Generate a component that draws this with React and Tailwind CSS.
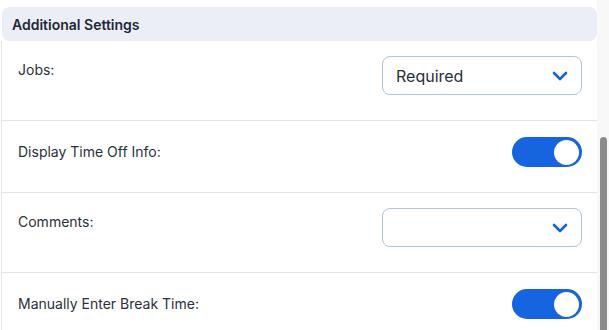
import React from "react";

function Chevron() {
  return (
    <svg width="16" height="10" viewBox="0 0 16 10" fill="none">
      <path d="M2 2 L8 8 L14 2" stroke="#1664e0" strokeWidth="2.6" strokeLinecap="round" strokeLinejoin="round" />
    </svg>
  );
}

function Select({ value }) {
  return (
    <div className="w-[200px] h-[39px] shrink-0 border border-[#aec6dc] rounded-[8px] flex items-center justify-between pl-[13px] pr-[13px] bg-white">
      <span className="text-[16px] text-[#2a2f3a]">{value}</span>
      <Chevron />
    </div>
  );
}

function Toggle() {
  return (
    <div className="w-[70px] h-[30px] shrink-0 rounded-full bg-[#1664e0] flex items-center justify-end pr-[3px]">
      <div className="w-[25px] h-[25px] rounded-full bg-white" />
    </div>
  );
}

function Row({ label, children, select, last }) {
  return (
    <div
      className={`shrink-0 flex justify-between pl-[16px] pr-[15px] pb-[25px] ${select ? "items-start pt-[15px]" : "items-center pt-[16px]"} ${last ? "" : "border-b border-[#e4e4e4]"}`}
    >
      <span className={`text-[14px] leading-[20px] text-[#2b313c] ${select ? "pt-[4px]" : ""}`}>{label}</span>
      {children}
    </div>
  );
}

export default function App() {
  return (
    <div
      className="w-[609px] h-[330px] overflow-hidden flex bg-white"
      style={{ fontFamily: "Inter, 'Noto Sans', sans-serif" }}
    >
      <div className="w-[597px] shrink-0 pt-[7px] flex flex-col">
        <div className="shrink-0 ml-[2px] h-[34px] rounded-[8px] bg-[#ebeef6] flex items-center pl-[10px]">
          <span className="text-[14px] font-semibold text-[#1e2836]">Additional Settings</span>
        </div>
        <div className="shrink-0 ml-[1px] border-l border-[#e4e4e4] flex flex-col">
          <Row label="Jobs:" select>
            <Select value="Required" />
          </Row>
          <Row label="Display Time Off Info:">
            <Toggle />
          </Row>
          <Row label="Comments:" select>
            <Select value="" />
          </Row>
          <Row label="Manually Enter Break Time:" last>
            <Toggle />
          </Row>
        </div>
      </div>
      <div className="w-[12px] shrink-0 bg-[#f8f8f8] flex flex-col pt-[137px] pl-[3px]">
        <div className="w-[7px] flex-1 bg-[#8b8b8b] rounded-t-full" />
      </div>
    </div>
  );
}
